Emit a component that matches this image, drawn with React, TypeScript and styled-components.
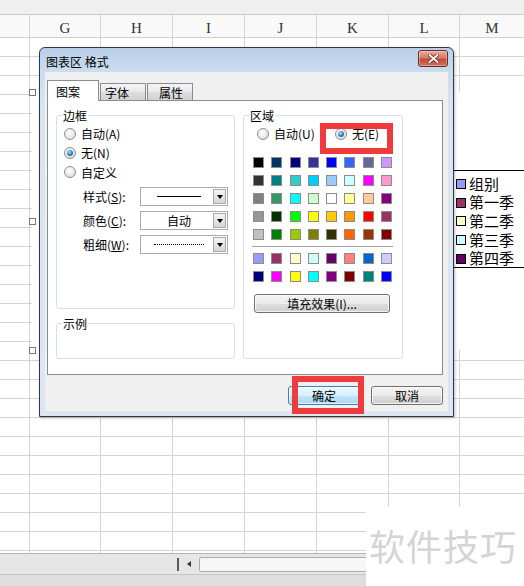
import styled, { createGlobalStyle } from "styled-components";

const UI_FONT = `"Noto Sans CJK SC", "Liberation Sans", sans-serif`;
const COLS = "30px 71px 72px 72px 72px 72px 71px 1fr";
const LETTERS = ["", "G", "H", "I", "J", "K", "L", "M"];
const ROW_COUNT = 28;

const PALETTE = [
  ["#000000", "#003366", "#000080", "#333399", "#0000ff", "#3366ff", "#666699", "#cc99ff"],
  ["#333333", "#008080", "#33cccc", "#00ccff", "#99ccff", "#ccffff", "#ff00ff", "#ff99cc"],
  ["#808080", "#339966", "#00ffff", "#ccffcc", "#ffffff", "#ffff99", "#ffcc99", "#800080"],
  ["#969696", "#003300", "#00ff00", "#ffff00", "#ffcc00", "#ff9900", "#ff0000", "#993366"],
  ["#c0c0c0", "#008000", "#99cc00", "#808000", "#333300", "#ff6600", "#993300", "#800000"],
];
const CHART_COLORS = [
  ["#9999ff", "#993366", "#ffffcc", "#ccffff", "#660066", "#ff8080", "#0066cc", "#ccccff"],
  ["#000080", "#ff00ff", "#ffff00", "#00ffff", "#800080", "#800000", "#008080", "#0000ff"],
];
const LEGEND = [
  { name: "组别", color: "#9999ff" },
  { name: "第一季", color: "#993366" },
  { name: "第二季", color: "#ffffcc" },
  { name: "第三季", color: "#ccffff" },
  { name: "第四季", color: "#660066" },
];

const GlobalStyle = createGlobalStyle`
  html, body { margin: 0; padding: 0; background: #fff; }
  body { font-family: ${UI_FONT}; color: #000; }
  * { box-sizing: border-box; }
`;

const Screen = styled.div`
  position: relative;
  width: 524px;
  height: 586px;
  overflow: hidden;
  background: #fff;
  display: flex;
  flex-direction: column;
`;

const TopStrip = styled.div`
  flex: 0 0 15px;
  background: #efefef;
  border-bottom: 1px solid #cdcdcd;
`;

const HeaderRow = styled.div`
  flex: 0 0 21px;
  display: grid;
  grid-template-columns: ${COLS};
  background: #f9f9f9;
  border-bottom: 1px solid #d0d0d0;
`;

const HeaderCell = styled.div`
  border-right: 1px solid #d4d4d4;
  display: flex;
  align-items: center;
  justify-content: center;
  padding-top: 5px;
  font-family: "Liberation Serif", serif;
  font-size: 15px;
  color: #333;
  &:last-child { border-right: none; }
`;

const SheetBody = styled.div`
  flex: 1;
  overflow: hidden;
`;

const SheetRow = styled.div`
  height: 19px;
  display: grid;
  grid-template-columns: ${COLS};
`;

const Cell = styled.div`
  border-right: 1px solid #d4d4d4;
  border-bottom: 1px solid #d4d4d4;
  &:last-child { border-right: none; }
`;

const ScrollArea = styled.div`
  flex: 0 0 21px;
  display: flex;
  align-items: center;
  background: #e6e6e6;
  border-top: 1px solid #b4b4b4;
`;

const SheetTabs = styled.div`
  width: 177px;
`;

const Splitter = styled.div`
  width: 2px;
  height: 13px;
  background: #5a5a5a;
`;

const ScrollArrow = styled.div`
  width: 20px;
  display: flex;
  justify-content: center;
  &::before {
    content: "";
    border-style: solid;
    border-width: 3.5px 4px 3.5px 0;
    border-color: transparent #333 transparent transparent;
  }
`;

const ScrollTrack = styled.div`
  flex: 1;
  height: 15px;
  background: #f6f6f6;
  border: 1px solid #acacac;
  border-radius: 2px;
`;

const BottomStrip = styled.div`
  flex: 0 0 12px;
  background: #dedede;
  border-top: 1px solid #c6c6c6;
`;

const ChartArea = styled.div`
  position: absolute;
  left: 32px;
  top: 92px;
  width: 492px;
  height: 258px;
  background: #fff;
`;

const Handle = styled.div<{ $top: string }>`
  position: absolute;
  left: -3px;
  top: ${(p) => p.$top};
  width: 7px;
  height: 7px;
  background: #fff;
  border: 1px solid #777;
`;

const Legend = styled.div`
  position: absolute;
  left: 418px;
  top: 78px;
  width: 90px;
  height: 98px;
  border: 1px solid #000;
  padding: 4px 0 0 5px;
`;

const LegendRow = styled.div`
  height: 18.6px;
  display: flex;
  align-items: center;
  gap: 3px;
`;

const LegendText = styled.span`
  font-family: "Liberation Sans", "Noto Sans CJK SC", sans-serif;
  font-size: 15px;
  line-height: 17px;
`;

const LegendSwatch = styled.span<{ $color: string }>`
  width: 10px;
  height: 10px;
  border: 1px solid #000;
  background: ${(p) => p.$color};
`;

const Dialog = styled.div`
  position: absolute;
  left: 39px;
  top: 47px;
  width: 415px;
  height: 370px;
  display: flex;
  flex-direction: column;
  border: 1px solid #2c3a48;
  border-radius: 6px 6px 0 0;
  background: linear-gradient(to bottom, #b9cfe8 0, #cbdcef 24px, #dae4ef 60px, #dde6f0 100%);
  box-shadow: 1px 1px 3px rgba(0, 0, 0, 0.25);
`;

const TitleBar = styled.div`
  flex: 0 0 24px;
  display: flex;
  align-items: flex-start;
  justify-content: space-between;
  padding-left: 6px;
`;

const TitleText = styled.span`
  font-size: 12px;
  line-height: 14px;
  margin-top: 7px;
  color: #000;
`;

const CloseButton = styled.div`
  width: 30px;
  height: 17px;
  margin: 2px 5px 0 0;
  display: flex;
  align-items: center;
  justify-content: center;
  border: 1px solid #6d2a21;
  border-radius: 3px;
  background: linear-gradient(to bottom, #e8a99c 0%, #d97b6a 45%, #c44a35 55%, #d0715d 100%);
  box-shadow: inset 0 0 0 1px rgba(255, 255, 255, 0.35);
`;

const Client = styled.div`
  flex: 1;
  margin: 0 5px 5px 5px;
  padding: 8px 5px 0 2px;
  background: #f0f0f0;
  display: flex;
  flex-direction: column;
`;

const TabStrip = styled.div`
  height: 21px;
  margin-bottom: -1px;
  display: flex;
  align-items: flex-end;
  gap: 1px;
  position: relative;
  z-index: 1;
`;

const Tab = styled.div<{ $active?: boolean; $width: number; $indent: number }>`
  width: ${(p) => p.$width}px;
  height: ${(p) => (p.$active ? 21 : 17)}px;
  margin-bottom: ${(p) => (p.$active ? 0 : 1)}px;
  padding-left: ${(p) => p.$indent}px;
  display: flex;
  align-items: center;
  font-size: 12px;
  border: 1px solid #898c95;
  border-bottom: none;
  background: ${(p) =>
    p.$active ? "#fff" : "linear-gradient(to bottom, #f4f4f4 0%, #e9e9e9 50%, #dddddd 51%, #d2d2d2 100%)"};
`;

const TabPanel = styled.div`
  height: 275px;
  border: 1px solid #898c95;
  background: #fff;
  padding: 14px 0 0 8px;
  display: flex;
  gap: 8px;
`;

const Column = styled.div`
  width: 179px;
  display: flex;
  flex-direction: column;
  gap: 14px;
`;

const GroupBox = styled.div<{ $width: number; $height: number }>`
  position: relative;
  width: ${(p) => p.$width}px;
  height: ${(p) => p.$height}px;
  border: 1px solid #d5dfe5;
  border-radius: 3px;
  padding: 8px 0 0 7px;
`;

const GroupLabel = styled.span`
  position: absolute;
  top: -8px;
  left: 5px;
  padding: 0 1px;
  background: #fff;
  font-size: 12px;
  line-height: 15px;
`;

const RadioRow = styled.label`
  height: 19.3px;
  display: flex;
  align-items: center;
  gap: 5px;
  font-size: 12px;
`;

const RadioCircle = styled.span<{ $checked?: boolean }>`
  position: relative;
  width: 12px;
  height: 12px;
  border-radius: 50%;
  border: 1px solid #8e8f8f;
  background: radial-gradient(circle at 40% 35%, #ffffff 0%, #e9e9e9 55%, #cfcfcf 100%);
  &::after {
    content: "";
    display: ${(p) => (p.$checked ? "block" : "none")};
    position: absolute;
    left: 2px;
    top: 2px;
    width: 6px;
    height: 6px;
    border-radius: 50%;
    background: radial-gradient(circle at 40% 35%, #b9e4fb 0%, #3b8ccf 45%, #0f3f6e 100%);
  }
`;

const RadioPair = styled.div`
  display: grid;
  grid-template-columns: 78px auto;
  margin-left: 3px;
`;

const FieldRow = styled.div`
  height: 24px;
  display: flex;
  align-items: center;
  padding-left: 19px;
  font-size: 12px;
  &:first-of-type { margin-top: 3px; }
`;

const FieldLabel = styled.span`
  width: 57px;
  u { text-decoration: underline; }
`;

const Combo = styled.div`
  width: 88px;
  height: 19px;
  display: flex;
  align-items: center;
  border: 1px solid #abadb3;
  background: #fff;
`;

const ComboValue = styled.div`
  flex: 1;
  display: flex;
  align-items: center;
  justify-content: center;
  padding-left: 4px;
  font-size: 12px;
`;

const LineSample = styled.span<{ $dotted?: boolean }>`
  width: ${(p) => (p.$dotted ? 50 : 44)}px;
  border-top: 1px ${(p) => (p.$dotted ? "dotted" : "solid")} #000;
`;

const ComboArrow = styled.span`
  width: 13px;
  height: 15px;
  margin-right: 1px;
  display: flex;
  align-items: center;
  justify-content: center;
  border: 1px solid #a9a9a9;
  background: linear-gradient(to bottom, #f6f6f6 0%, #e4e4e4 50%, #d6d6d6 100%);
  &::before {
    content: "";
    border-style: solid;
    border-width: 4px 3.5px 0 3.5px;
    border-color: #000 transparent transparent transparent;
  }
`;

const AreaContent = styled.div`
  padding-left: 3px;
`;

const SwatchGrid = styled.div`
  display: grid;
  grid-template-columns: repeat(8, 11px);
  column-gap: 7.3px;
  row-gap: 7px;
`;

const Swatch = styled.span<{ $color: string }>`
  width: 11px;
  height: 11px;
  border: 1px solid #8c8c8c;
  background: ${(p) => p.$color};
`;

const PaletteTop = styled(SwatchGrid)`
  margin: 14px 0 0 -1px;
`;

const PaletteBottom = styled(SwatchGrid)`
  margin-left: -1px;
`;

const Separator = styled.div`
  width: 141px;
  margin: 6px 0 6px -2px;
  border-top: 1px solid #a0a0a0;
`;

const PushButton = styled.div<{ $width: number; $default?: boolean }>`
  width: ${(p) => p.$width}px;
  height: 19px;
  display: flex;
  align-items: center;
  justify-content: center;
  font-size: 12px;
  border: 1px solid ${(p) => (p.$default ? "#3c7fb1" : "#707070")};
  border-radius: 3px;
  background: ${(p) =>
    p.$default
      ? "linear-gradient(to bottom, #eaf6fd 0%, #d9f0fc 50%, #bee6fd 51%, #a7d9f5 100%)"
      : "linear-gradient(to bottom, #f2f2f2 0%, #ebebeb 50%, #dddddd 51%, #cfcfcf 100%)"};
  box-shadow: inset 0 0 0 1px rgba(255, 255, 255, 0.7);
`;

const FillButton = styled(PushButton)`
  margin-top: 12px;
`;

const ButtonRow = styled.div`
  margin-top: 11px;
  display: flex;
  justify-content: flex-end;
  gap: 11px;
`;

const Callout = styled.div<{ $left: number; $top: number; $width: number; $height: number }>`
  position: absolute;
  left: ${(p) => p.$left}px;
  top: ${(p) => p.$top}px;
  width: ${(p) => p.$width}px;
  height: ${(p) => p.$height}px;
  border: 6px solid #ef3b3b;
`;

const Watermark = styled.div`
  position: absolute;
  left: 366px;
  top: 507px;
  right: 0;
  bottom: 0;
  background: #fff;
  display: flex;
  align-items: center;
  padding: 0 0 4px 3px;
  font-size: 36px;
  letter-spacing: 1px;
  color: #d4d4d4;
`;

const Radio = ({ label, checked }: { label: string; checked?: boolean }) => (
  <RadioRow>
    <RadioCircle $checked={checked} />
    {label}
  </RadioRow>
);

const App = () => {
  return (
    <>
      <GlobalStyle />
      <Screen>
        <TopStrip />
        <HeaderRow>
          {LETTERS.map((l, i) => (
            <HeaderCell key={i}>{l}</HeaderCell>
          ))}
        </HeaderRow>
        <SheetBody>
          {Array.from({ length: ROW_COUNT }).map((_, r) => (
            <SheetRow key={r}>
              {LETTERS.map((_, c) => (
                <Cell key={c} />
              ))}
            </SheetRow>
          ))}
        </SheetBody>
        <ScrollArea>
          <SheetTabs />
          <Splitter />
          <ScrollArrow />
          <ScrollTrack />
        </ScrollArea>
        <BottomStrip />

        <ChartArea>
          <Handle $top="-3px" />
          <Handle $top="calc(50% - 3px)" />
          <Handle $top="calc(100% - 3px)" />
          <Legend>
            {LEGEND.map((item) => (
              <LegendRow key={item.name}>
                <LegendSwatch $color={item.color} />
                <LegendText>{item.name}</LegendText>
              </LegendRow>
            ))}
          </Legend>
        </ChartArea>

        <Dialog>
          <TitleBar>
            <TitleText>图表区 格式</TitleText>
            <CloseButton>
              <svg width="11" height="9" viewBox="0 0 11 9">
                <path d="M1.5 1 L9.5 8 M9.5 1 L1.5 8" stroke="#5a1d15" strokeWidth="3.4" strokeLinecap="round" />
                <path d="M1.5 1 L9.5 8 M9.5 1 L1.5 8" stroke="#fff" strokeWidth="2" strokeLinecap="round" />
              </svg>
            </CloseButton>
          </TitleBar>
          <Client>
            <TabStrip>
              <Tab $active $width={52} $indent={8}>图案</Tab>
              <Tab $width={46} $indent={4}>字体</Tab>
              <Tab $width={46} $indent={11}>属性</Tab>
            </TabStrip>
            <TabPanel>
              <Column>
                <GroupBox $width={179} $height={194}>
                  <GroupLabel>边框</GroupLabel>
                  <Radio label="自动(A)" />
                  <Radio label="无(N)" checked />
                  <Radio label="自定义" />
                  <FieldRow>
                    <FieldLabel>样式(<u>S</u>):</FieldLabel>
                    <Combo>
                      <ComboValue>
                        <LineSample />
                      </ComboValue>
                      <ComboArrow />
                    </Combo>
                  </FieldRow>
                  <FieldRow>
                    <FieldLabel>颜色(<u>C</u>):</FieldLabel>
                    <Combo>
                      <ComboValue>自动</ComboValue>
                      <ComboArrow />
                    </Combo>
                  </FieldRow>
                  <FieldRow>
                    <FieldLabel>粗细(<u>W</u>):</FieldLabel>
                    <Combo>
                      <ComboValue>
                        <LineSample $dotted />
                      </ComboValue>
                      <ComboArrow />
                    </Combo>
                  </FieldRow>
                </GroupBox>
                <GroupBox $width={179} $height={36}>
                  <GroupLabel>示例</GroupLabel>
                </GroupBox>
              </Column>
              <GroupBox $width={160} $height={244}>
                <GroupLabel>区域</GroupLabel>
                <AreaContent>
                  <RadioPair>
                    <Radio label="自动(U)" />
                    <Radio label="无(E)" checked />
                  </RadioPair>
                  <PaletteTop>
                    {PALETTE.flat().map((c, i) => (
                      <Swatch key={i} $color={c} />
                    ))}
                  </PaletteTop>
                  <Separator />
                  <PaletteBottom>
                    {CHART_COLORS.flat().map((c, i) => (
                      <Swatch key={i} $color={c} />
                    ))}
                  </PaletteBottom>
                  <FillButton $width={136}>填充效果(I)...</FillButton>
                </AreaContent>
              </GroupBox>
            </TabPanel>
            <ButtonRow>
              <PushButton $width={72} $default>确定</PushButton>
              <PushButton $width={72}>取消</PushButton>
            </ButtonRow>
          </Client>
        </Dialog>

        <Callout $left={320} $top={123} $width={73} $height={31} />
        <Callout $left={292} $top={376} $width={72} $height={38} />
        <Watermark>软件技巧</Watermark>
      </Screen>
    </>
  );
};

export default App;
